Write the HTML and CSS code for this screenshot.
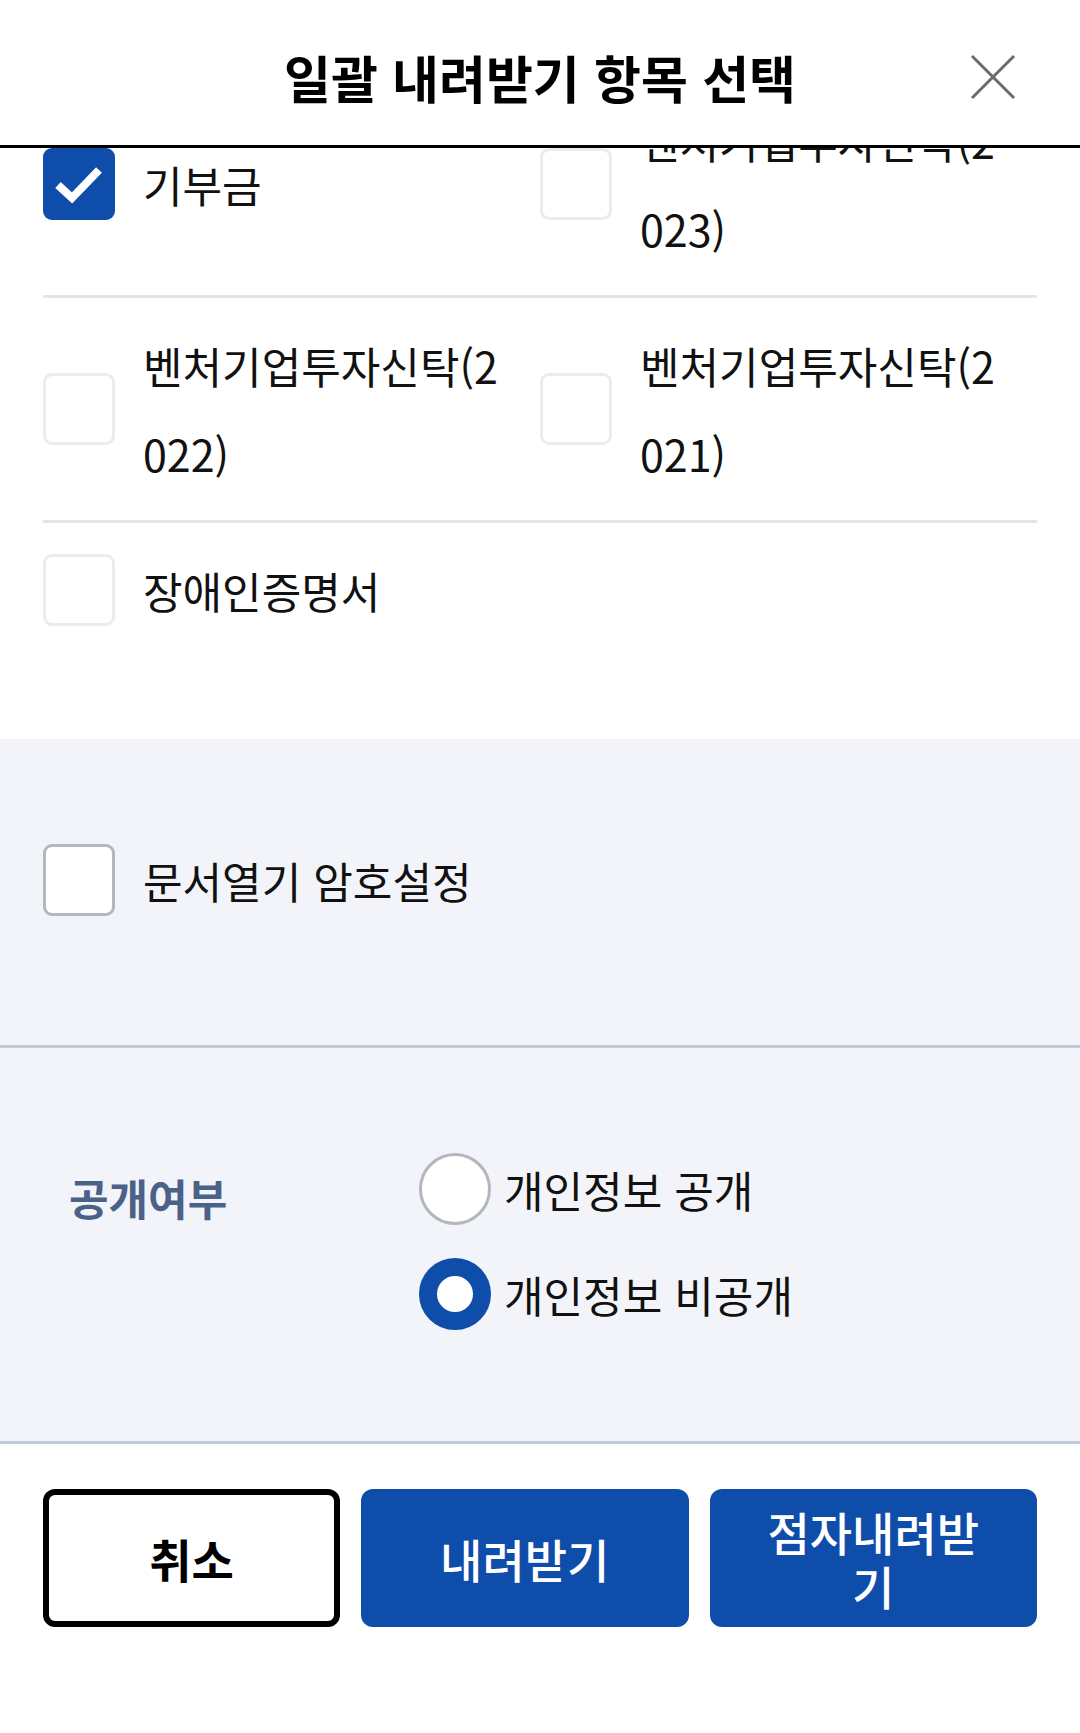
FILE: index.html
```html
<!DOCTYPE html>
<html lang="ko">
<head>
    <meta charset="UTF-8">
    <meta name="viewport" content="width=device-width, initial-scale=1.0">
    <title>일괄 내려받기 항목 선택</title>
    <link rel="stylesheet" href="styles.css">
</head>
<body>
    <header class="sheet-head">
        <h1 class="sheet-title">일괄 내려받기 항목 선택</h1>
        <button class="close-btn" aria-label="닫기">
            <svg width="48" height="48" viewBox="0 0 48 48">
                <path d="M3 3 L45 45 M45 3 L3 45" stroke="#6b6b6b" stroke-width="3" fill="none"/>
            </svg>
        </button>
    </header>

    <div class="sheet-body">
        <div class="doc-list">
            <div class="doc-row">
                <label class="doc-item">
                    <span class="check checked">
                        <svg width="72" height="72" viewBox="0 0 72 72">
                            <polyline points="15,37 29,50 56,22" stroke="#fff" stroke-width="8" fill="none"/>
                        </svg>
                    </span>
                    <span class="doc-name">기부금</span>
                </label>
                <label class="doc-item">
                    <span class="check"></span>
                    <span class="doc-name">벤처기업투자신탁(2023)</span>
                </label>
            </div>
            <div class="doc-row">
                <label class="doc-item">
                    <span class="check"></span>
                    <span class="doc-name">벤처기업투자신탁(2022)</span>
                </label>
                <label class="doc-item">
                    <span class="check"></span>
                    <span class="doc-name">벤처기업투자신탁(2021)</span>
                </label>
            </div>
            <div class="doc-row">
                <label class="doc-item">
                    <span class="check"></span>
                    <span class="doc-name">장애인증명서</span>
                </label>
            </div>
        </div>

        <div class="option-box password">
            <label class="doc-item">
                <span class="check strong"></span>
                <span class="doc-name">문서열기 암호설정</span>
            </label>
        </div>

        <div class="option-box privacy">
            <div class="privacy-label">공개여부</div>
            <div class="radio-group">
                <label class="radio-item">
                    <span class="radio"></span>
                    <span class="radio-text">개인정보 공개</span>
                </label>
                <label class="radio-item">
                    <span class="radio on"></span>
                    <span class="radio-text">개인정보 비공개</span>
                </label>
            </div>
        </div>

        <div class="sheet-foot">
            <button class="btn cancel">취소</button>
            <button class="btn primary">내려받기</button>
            <button class="btn primary braille">점자내려받기</button>
        </div>
    </div>
</body>
</html>
```

FILE: styles.css
```css
body {
    margin: 0;
    background: #fff;
    color: #111;
    font-family: "Noto Sans CJK KR", "Noto Sans", sans-serif;
}

/* header */

.sheet-head {
    position: relative;
    z-index: 2;
    height: 148px;
    box-sizing: border-box;
    padding-top: 9px;
    background: #fff;
    border-bottom: 3px solid #000;
    display: grid;
    grid-template-columns: 1fr auto 1fr;
    align-items: center;
}
.sheet-title {
    grid-column: 2;
    margin: 0;
    font-size: 51px;
    font-weight: 700;
    color: #000;
}
.close-btn {
    justify-self: end;
    margin-right: 63px;
    padding: 0;
    border: none;
    background: none;
    line-height: 0;
}

/* scrolled content, pulled up under the header */

.sheet-body {
    margin-top: -75px;
}

.doc-list {
    padding: 0 43px 82px;
}
.doc-row {
    display: grid;
    grid-template-columns: 1fr 1fr;
    padding: 23px 0;
    border-bottom: 3px solid #e3e5ea;
}
.doc-row:last-child {
    border-bottom: none;
}
.doc-item {
    display: flex;
    align-items: center;
    gap: 28px;
    padding-right: 30px;
}
.doc-name {
    flex: 1;
    font-size: 43px;
    line-height: 88px;
    word-break: break-all;
}

.check {
    flex: none;
    width: 72px;
    height: 72px;
    box-sizing: border-box;
    border: 3px solid #ececec;
    border-radius: 9px;
    background: #fff;
}
.check.checked {
    border: none;
    background: #0f4dab;
}
.check.checked svg {
    display: block;
}
.check.strong {
    border-color: #b4b7bd;
}

/* option boxes */

.option-box {
    background: #f2f4f9;
    border-bottom: 3px solid #c0cadb;
    padding: 0 43px;
}
.password {
    padding-top: 97px;
    padding-bottom: 121px;
}
.privacy {
    padding-top: 105px;
    padding-bottom: 111px;
    display: grid;
    grid-template-columns: 376px 1fr;
}
.privacy-label {
    padding-left: 26px;
    font-size: 43px;
    line-height: 88px;
    font-weight: 700;
    color: #4a6288;
}
.radio-group {
    display: flex;
    flex-direction: column;
    gap: 33px;
}
.radio-item {
    display: flex;
    align-items: center;
    gap: 13px;
}
.radio {
    width: 72px;
    height: 72px;
    box-sizing: border-box;
    border: 3px solid #b3b6bc;
    border-radius: 50%;
    background: #fff;
}
.radio.on {
    border: 18px solid #0f4dab;
}
.radio-text {
    font-size: 43px;
    line-height: 72px;
}

/* buttons */

.sheet-foot {
    padding: 45px 43px 0;
    display: grid;
    grid-template-columns: 297px 1fr 1fr;
    gap: 21px;
}
.btn {
    height: 138px;
    border-radius: 12px;
    font-family: inherit;
    font-size: 46px;
    padding: 0 40px;
    cursor: pointer;
}
.btn.cancel {
    border: 6px solid #000;
    background: #fff;
    color: #000;
    font-weight: 700;
}
.btn.primary {
    border: none;
    background: #0f4dab;
    color: #fff;
    font-weight: 500;
}
.btn.braille {
    line-height: 54px;
}
```
